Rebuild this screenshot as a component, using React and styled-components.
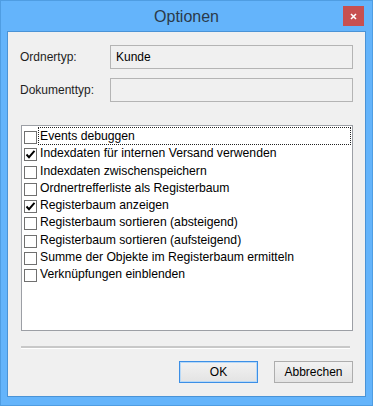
import React from 'react';
import styled, { createGlobalStyle } from 'styled-components';

const options = [
    { label: 'Events debuggen', checked: false, focused: true },
    { label: 'Indexdaten für internen Versand verwenden', checked: true },
    { label: 'Indexdaten zwischenspeichern', checked: false },
    { label: 'Ordnertrefferliste als Registerbaum', checked: false },
    { label: 'Registerbaum anzeigen', checked: true },
    { label: 'Registerbaum sortieren (absteigend)', checked: false },
    { label: 'Registerbaum sortieren (aufsteigend)', checked: false },
    { label: 'Summe der Objekte im Registerbaum ermitteln', checked: false },
    { label: 'Verknüpfungen einblenden', checked: false },
];

export default function App() {
    return (
        <>
            <GlobalStyle />
            <Window>
                <TitleBar>
                    <Title>Optionen</Title>
                    <CloseButton>
                        <svg width="7" height="7" viewBox="0 0 7 7">
                            <path d="M1 1 L6 6 M6 1 L1 6" stroke="#fff" strokeWidth="1.6" />
                        </svg>
                    </CloseButton>
                </TitleBar>
                <Client>
                    <FieldRow>
                        <Label>Ordnertyp:</Label>
                        <TextBox>Kunde</TextBox>
                    </FieldRow>
                    <FieldRow>
                        <Label>Dokumenttyp:</Label>
                        <TextBox />
                    </FieldRow>

                    <ListBox>
                        {options.map((o) => (
                            <Item key={o.label}>
                                <CheckBox>
                                    {o.checked && (
                                        <svg width="11" height="11" viewBox="0 0 11 11">
                                            <path d="M1.5 5.5 L4 8.2 L9.5 1.8" stroke="#000" strokeWidth="1.9" fill="none" />
                                        </svg>
                                    )}
                                </CheckBox>
                                <ItemText focused={o.focused}>{o.label}</ItemText>
                            </Item>
                        ))}
                    </ListBox>

                    <Separator />

                    <ButtonRow>
                        <Button primary>OK</Button>
                        <Button>Abbrechen</Button>
                    </ButtonRow>
                </Client>
            </Window>
        </>
    );
}

// Styles
const GlobalStyle = createGlobalStyle`
    html, body {
        margin: 0;
        padding: 0;
        background: #ffffff;
    }
    body {
        font-family: "Liberation Sans", Arial, sans-serif;
    }
`;

const Window = styled.div`
    width: 373px;
    height: 406px;
    box-sizing: border-box;
    background: #64b4fb;
    border: 1px solid #4f9de2;
    padding: 0 6px 8px 6px;
    display: flex;
    flex-direction: column;
`;

const TitleBar = styled.div`
    height: 30px;
    position: relative;
    display: flex;
    align-items: center;
    justify-content: center;
`;

const Title = styled.div`
    font-size: 16px;
    color: #2b3a4a;
    margin-top: 2px;
`;

const CloseButton = styled.div`
    position: absolute;
    right: 2px;
    top: 5px;
    width: 21px;
    height: 20px;
    background: #c75050;
    display: flex;
    align-items: center;
    justify-content: center;
`;

const Client = styled.div`
    flex: 1;
    background: #f0f0f0;
    border: 1px solid #4a93d6;
    padding: 13px 12px 11px 12px;
    display: flex;
    flex-direction: column;
`;

const FieldRow = styled.div`
    display: flex;
    align-items: center;
    height: 24px;
    margin-bottom: 9px;
`;

const Label = styled.div`
    width: 90px;
    font-size: 12px;
    color: #1e1e1e;
`;

const TextBox = styled.div`
    flex: 1;
    height: 24px;
    box-sizing: border-box;
    border: 1px solid #b4b4b4;
    background: #f0f0f0;
    font-size: 12px;
    color: #000;
    padding: 4px 5px;
`;

const ListBox = styled.div`
    margin-top: 14px;
    margin-left: 1px;
    height: 206px;
    box-sizing: border-box;
    border: 1px solid #9c9fa5;
    background: #ffffff;
    padding: 1px 1px 0 2px;
`;

const Item = styled.div`
    display: flex;
    align-items: flex-start;
    height: 17.25px;
`;

const CheckBox = styled.span`
    width: 13px;
    height: 13px;
    box-sizing: border-box;
    border: 1px solid #707070;
    background: #ffffff;
    margin-top: 4px;
    display: flex;
    align-items: center;
    justify-content: center;
    flex-shrink: 0;
`;

const ItemText = styled.span`
    flex: ${(p) => (p.focused ? 1 : 'none')};
    height: 18px;
    box-sizing: border-box;
    margin-left: 1px;
    padding: 1px 0 0 1px;
    font-size: 12.2px;
    line-height: 15px;
    color: #000;
    border: 1px dotted ${(p) => (p.focused ? '#222' : 'transparent')};
    white-space: nowrap;
`;

const Separator = styled.div`
    margin: 15px 3px 0 1px;
    height: 2px;
    background: #c8c8c8;
    border-bottom: 1px solid #ffffff;
`;

const ButtonRow = styled.div`
    display: flex;
    justify-content: flex-end;
    gap: 16px;
    margin-top: 12px;
`;

const Button = styled.div`
    width: 79px;
    height: 22px;
    box-sizing: border-box;
    border: 1px solid ${(p) => (p.primary ? '#3c8fe6' : '#adadad')};
    background: linear-gradient(#f2f2f2, #e3e3e3);
    box-shadow: ${(p) => (p.primary ? 'inset 0 0 0 1px #b8d9f7' : 'none')};
    font-size: 12px;
    color: #000;
    display: flex;
    align-items: center;
    justify-content: center;
`;
